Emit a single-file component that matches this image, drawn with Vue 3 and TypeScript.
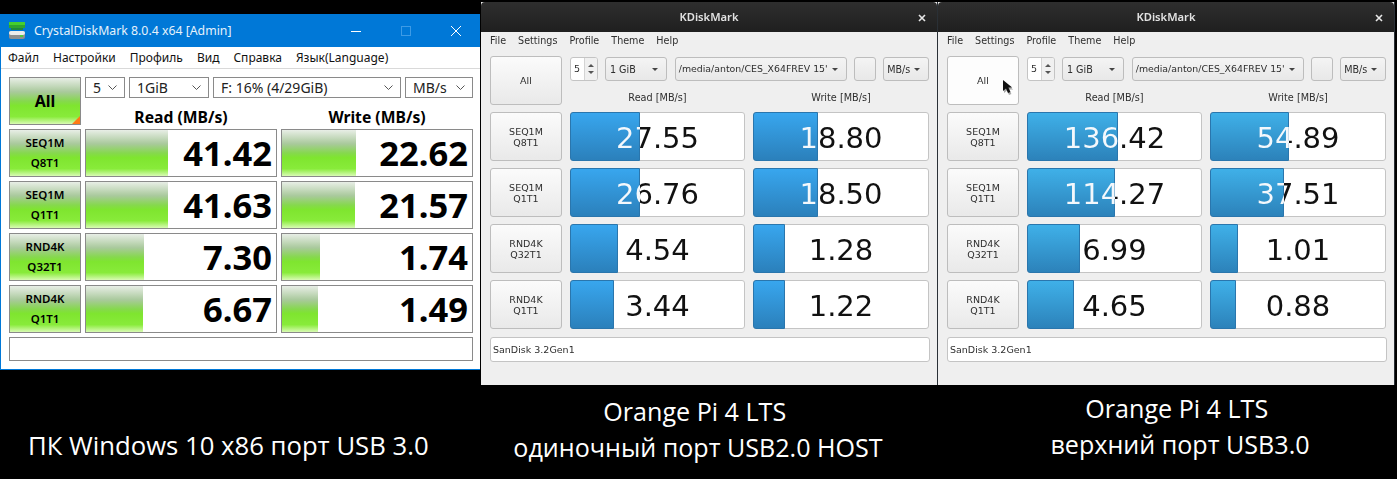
<script setup lang="ts">
interface Row {
  top: string
  bottom: string
  read: string
  readW: number
  write: string
  writeW: number
}

const labels = [
  ['SEQ1M', 'Q8T1'],
  ['SEQ1M', 'Q1T1'],
  ['RND4K', 'Q32T1'],
  ['RND4K', 'Q1T1'],
]

function rows(v: [string, number, string, number][]): Row[] {
  return v.map((r, i) => ({
    top: labels[i][0],
    bottom: labels[i][1],
    read: r[0],
    readW: r[1],
    write: r[2],
    writeW: r[3],
  }))
}

const cdmRows = rows([
  ['41.42', 82, '22.62', 74],
  ['41.63', 82, '21.57', 73],
  ['7.30', 58, '1.74', 38],
  ['6.67', 57, '1.49', 36],
])

const kdWindows = [
  {
    id: 'kd-left',
    rows: rows([
      ['27.55', 70, '18.80', 65],
      ['26.76', 70, '18.50', 65],
      ['4.54', 48, '1.28', 32],
      ['3.44', 44, '1.22', 32],
    ]),
  },
  {
    id: 'kd-right',
    rows: rows([
      ['136.42', 91, '54.89', 79],
      ['114.27', 88, '37.51', 74],
      ['6.99', 53, '1.01', 28],
      ['4.65', 47, '0.88', 26],
    ]),
  },
]

const cdmMenu = ['Файл', 'Настройки', 'Профиль', 'Вид', 'Справка', 'Язык(Language)']
const kdMenu = ['File', 'Settings', 'Profile', 'Theme', 'Help']
</script>

<template>
  <div class="page">
    <!-- CrystalDiskMark -->
    <section class="cdm">
      <header class="cdm-title">
        <svg class="cdm-icon" width="18" height="18" viewBox="0 0 18 18">
          <rect x="0" y="0" width="16" height="3" fill="#46cf2e" />
          <rect x="0" y="3" width="16" height="3" fill="#2fa52f" />
          <rect x="2" y="6" width="12" height="2" fill="#1d8a3c" />
          <rect x="0" y="9" width="16" height="8" rx="2" fill="#8f8f8f" />
          <rect x="0" y="9" width="16" height="4" rx="2" fill="#ececec" />
          <rect x="11" y="13" width="3" height="2" fill="#55c83a" />
        </svg>
        <span class="cdm-name">CrystalDiskMark 8.0.4 x64 [Admin]</span>
        <div class="cdm-controls">
          <svg width="12" height="12" viewBox="0 0 12 12"><path d="M1 6.5h10" stroke="#fff" fill="none" /></svg>
          <svg width="12" height="12" viewBox="0 0 12 12"><rect x="1.5" y="1.5" width="9" height="9" stroke="#3d9be6" fill="none" /></svg>
          <svg width="12" height="12" viewBox="0 0 12 12"><path d="M1 1l10 10M11 1L1 11" stroke="#fff" fill="none" /></svg>
        </div>
      </header>
      <nav class="cdm-menu">
        <span v-for="m in cdmMenu" :key="m">{{ m }}</span>
      </nav>
      <div class="cdm-grid">
        <div class="cdm-btn cdm-all">All<i class="cdm-corner"></i></div>
        <div class="cdm-top">
          <div class="cdm-combos">
            <div class="cdm-combo w-count">5<svg class="chev" width="9" height="5" viewBox="0 0 9 5"><path d="M.5.5l4 4 4-4" stroke="#555" fill="none" /></svg></div>
            <div class="cdm-combo w-size">1GiB<svg class="chev" width="9" height="5" viewBox="0 0 9 5"><path d="M.5.5l4 4 4-4" stroke="#555" fill="none" /></svg></div>
            <div class="cdm-combo w-drive">F: 16% (4/29GiB)<svg class="chev" width="9" height="5" viewBox="0 0 9 5"><path d="M.5.5l4 4 4-4" stroke="#555" fill="none" /></svg></div>
            <div class="cdm-combo w-unit">MB/s<svg class="chev" width="9" height="5" viewBox="0 0 9 5"><path d="M.5.5l4 4 4-4" stroke="#555" fill="none" /></svg></div>
          </div>
          <div class="cdm-heads">
            <span>Read (MB/s)</span>
            <span>Write (MB/s)</span>
          </div>
        </div>
        <template v-for="r in cdmRows" :key="r.read">
          <div class="cdm-btn cdm-label">
            <span>{{ r.top }}</span>
            <span>{{ r.bottom }}</span>
          </div>
          <div class="cdm-cell">
            <div class="cdm-bar" :style="{ width: r.readW + 'px' }"></div>
            <b>{{ r.read }}</b>
          </div>
          <div class="cdm-cell">
            <div class="cdm-bar" :style="{ width: r.writeW + 'px' }"></div>
            <b>{{ r.write }}</b>
          </div>
        </template>
        <div class="cdm-comment"></div>
      </div>
    </section>

    <!-- KDiskMark, twice -->
    <section v-for="w in kdWindows" :key="w.id" class="kd" :class="w.id">
      <header class="kd-title">
        <span>KDiskMark</span>
        <svg class="kd-close" width="8" height="8" viewBox="0 0 8 8"><path d="M1 1l6 6M7 1L1 7" stroke="#e8e8e8" stroke-width="1.6" fill="none" /></svg>
      </header>
      <nav class="kd-menu">
        <span v-for="m in kdMenu" :key="m">{{ m }}</span>
      </nav>
      <div class="kd-grid">
        <div class="kd-btn kd-all">All</div>
        <div class="kd-top">
          <div class="kd-controls">
            <div class="kd-spin">
              <span class="kd-spin-val">5</span>
              <span class="kd-spin-arrows"><i class="up"></i><i class="down"></i></span>
            </div>
            <div class="kd-combo w-size">1 GiB<i class="kd-caret"></i></div>
            <div class="kd-combo w-path"><span class="kd-path">/media/anton/CES_X64FREV 15'</span><i class="kd-caret"></i></div>
            <div class="kd-combo w-blank"></div>
            <div class="kd-combo w-unit">MB/s<i class="kd-caret"></i></div>
          </div>
          <div class="kd-heads">
            <span>Read [MB/s]</span>
            <span>Write [MB/s]</span>
          </div>
        </div>
        <template v-for="r in w.rows" :key="r.read">
          <div class="kd-btn kd-label">{{ r.top }}<br />{{ r.bottom }}</div>
          <div class="kd-cell" :style="{ '--fill': r.readW + 'px' }">
            <div class="kd-fill"></div>
            <span class="kd-val">{{ r.read }}</span>
          </div>
          <div class="kd-cell" :style="{ '--fill': r.writeW + 'px' }">
            <div class="kd-fill"></div>
            <span class="kd-val">{{ r.write }}</span>
          </div>
        </template>
        <div class="kd-comment">SanDisk 3.2Gen1</div>
      </div>
      <svg v-if="w.id === 'kd-right'" class="kd-cursor" width="12" height="18" viewBox="0 0 12 18">
        <path d="M2 3l0 11 3-2.6 2 4.6 2.4-1-2-4.4 3.8-.2z" fill="#555" opacity=".5" />
        <path d="M1 1l0 11 3-2.6 2 4.6 2.4-1-2-4.4 3.8-.2z" fill="#111" />
      </svg>
    </section>

    <p class="caption cap-a">ПК Windows 10 x86 порт USB 3.0</p>
    <p class="caption cap-b">Orange Pi 4 LTS&nbsp;<br />одиночный порт USB2.0 HOST</p>
    <p class="caption cap-c">Orange Pi 4 LTS&nbsp;<br />верхний порт USB3.0</p>
  </div>
</template>

<style scoped>
.page {
  position: relative;
  width: 1397px;
  height: 479px;
  overflow: hidden;
  background: #000;
}

/* --- CrystalDiskMark --- */
.cdm {
  position: absolute;
  left: 0;
  top: 14px;
  width: 480px;
  height: 356px;
  box-sizing: border-box;
  background: #fff;
  border-left: 1px solid #0078d7;
  border-bottom: 1px solid #0078d7;
  font-family: "Noto Sans", sans-serif;
  color: #000;
}

.cdm-title {
  display: flex;
  align-items: center;
  height: 33px;
  margin-left: -1px;
  padding-left: 9px;
  background: #0078d7;
  color: #fff;
  font-size: 12.3px;
}

.cdm-icon {
  flex: none;
}

.cdm-name {
  margin-left: 7px;
  color: #e6f2fb;
}

.cdm-controls {
  display: flex;
  gap: 38px;
  margin-left: auto;
  margin-right: 18px;
}

.cdm-menu {
  display: flex;
  gap: 14px;
  align-items: center;
  height: 21px;
  padding-left: 7px;
  border-bottom: 1px solid #d9d9d9;
  font-size: 12px;
  color: #111;
}

.cdm-grid {
  display: grid;
  grid-template-columns: 72px 192px 192px;
  grid-auto-rows: 48px;
  gap: 4px;
  padding: 8px 0 0 8px;
}

.cdm-btn {
  box-sizing: border-box;
  border: 1px solid #8a8a8a;
  background: linear-gradient(#e8eee6 0%, #a9c99c 30%, #86d84e 50%, #7fe52f 60%, #88eb3a 84%, #d9fbb4 100%);
}

.cdm-all {
  position: relative;
  display: flex;
  align-items: center;
  justify-content: center;
  font-size: 16px;
  font-weight: 700;
}

.cdm-corner {
  position: absolute;
  right: 0;
  bottom: 0;
  border-style: solid;
  border-width: 0 0 8px 8px;
  border-color: transparent transparent #ff7a14 transparent;
}

.cdm-top {
  grid-column: span 2;
  display: flex;
  flex-direction: column;
}

.cdm-combos {
  display: flex;
  gap: 4px;
  height: 24px;
}

.cdm-combo {
  box-sizing: border-box;
  display: flex;
  align-items: center;
  justify-content: space-between;
  padding: 0 7px;
  border: 1px solid #8a8a8a;
  background: #fff;
  font-size: 14px;
  color: #222;
}

.cdm-combo.w-count { width: 40px; }
.cdm-combo.w-size { width: 80px; }
.cdm-combo.w-drive { width: 188px; }
.cdm-combo.w-unit { width: 68px; }

.cdm-heads {
  display: grid;
  grid-template-columns: 192px 192px;
  column-gap: 4px;
  flex: 1;
  align-items: center;
  padding-top: 8px;
  text-align: center;
  font-size: 15.7px;
  font-weight: 700;
}

.cdm-label {
  display: flex;
  flex-direction: column;
  align-items: center;
  justify-content: center;
  gap: 2px;
  padding-bottom: 1px;
  font-size: 11.5px;
  font-weight: 600;
  line-height: 18px;
}

.cdm-cell {
  position: relative;
  box-sizing: border-box;
  display: flex;
  align-items: center;
  justify-content: flex-end;
  padding-right: 4px;
  border: 1px solid #8a8a8a;
  background: #fff;
}

.cdm-bar {
  position: absolute;
  left: 0;
  top: 0;
  bottom: 0;
  background: linear-gradient(#e8eee6 0%, #a9c99c 30%, #86d84e 50%, #7fe52f 60%, #88eb3a 84%, #d9fbb4 100%);
}

.cdm-cell b {
  position: relative;
  font-size: 34.5px;
  line-height: 1;
  font-weight: 700;
}

.cdm-comment {
  grid-column: 1 / -1;
  box-sizing: border-box;
  height: 24px;
  border: 1px solid #8a8a8a;
}

/* --- KDiskMark --- */
.kd {
  position: absolute;
  top: 2px;
  width: 457px;
  height: 383px;
  box-sizing: border-box;
  background: #efefef;
  border-right: 1px solid #2a3036;
  font-family: "DejaVu Sans", sans-serif;
  color: #2e2e2e;
  filter: blur(0.3px);
}

.kd-left { left: 481px; }
.kd-right { left: 938px; }

.kd-title {
  position: relative;
  display: flex;
  align-items: center;
  justify-content: center;
  height: 30px;
  padding-bottom: 2px;
  box-sizing: border-box;
  border-radius: 4px 4px 0 0;
  background: linear-gradient(#2e2e2e, #1f1f1f);
  color: #e2e2e2;
  font-family: "Noto Sans", sans-serif;
  font-size: 11.2px;
  font-weight: 600;
}

.kd-close {
  position: absolute;
  right: 11px;
  top: 12px;
}

.kd-menu {
  display: flex;
  gap: 12px;
  align-items: center;
  box-sizing: border-box;
  height: 20px;
  padding: 0 0 4px 9px;
  font-size: 9.6px;
}

.kd-grid {
  display: grid;
  grid-template-columns: 72px 175px 176px;
  grid-auto-rows: 49px;
  gap: 7px 8px;
  padding: 4px 0 0 9px;
}

.kd-btn {
  box-sizing: border-box;
  display: flex;
  align-items: center;
  justify-content: center;
  border: 1px solid #bdbdbd;
  border-radius: 3px;
  background: linear-gradient(#fbfbfb, #e9e9e9);
  text-align: center;
  font-size: 9.5px;
  line-height: 11px;
}

.kd-right .kd-all {
  background: #fdfdfd;
}

.kd-top {
  grid-column: span 2;
  display: flex;
  flex-direction: column;
}

.kd-controls {
  display: flex;
  align-items: flex-start;
  height: 25px;
  margin-top: 1px;
}

.kd-spin {
  box-sizing: border-box;
  display: flex;
  width: 28px;
  height: 24px;
  border: 1px solid #c4c4c4;
  border-radius: 3px;
  background: #fff;
  font-size: 9.5px;
  overflow: hidden;
}

.kd-spin-val {
  flex: 1;
  padding-left: 3px;
  line-height: 22px;
}

.kd-spin-arrows {
  display: flex;
  flex-direction: column;
  align-items: center;
  justify-content: center;
  gap: 4px;
  width: 12px;
  background: #f0f0f0;
  border-left: 1px solid #d4d4d4;
}

.kd-spin-arrows i {
  border-left: 3px solid transparent;
  border-right: 3px solid transparent;
}

.kd-spin-arrows .up { border-bottom: 3px solid #555; }
.kd-spin-arrows .down { border-top: 3px solid #555; }

.kd-combo {
  box-sizing: border-box;
  display: flex;
  align-items: center;
  justify-content: space-between;
  height: 24px;
  padding: 0 8px 0 3px;
  border: 1px solid #bdbdbd;
  border-radius: 3px;
  background: linear-gradient(#f4f4f4, #e8e8e8);
  font-size: 9.6px;
}

.kd-combo.w-size { width: 62px; margin-left: 7px; padding-left: 4px; }
.kd-combo.w-path { width: 173px; margin-left: 8px; }
.kd-combo.w-blank { width: 22px; margin-left: 7px; }
.kd-combo.w-unit { width: 46px; margin-left: 7px; }

.kd-path {
  width: 151px;
  white-space: nowrap;
  font-size: 9.4px;
  line-height: 14px;
}

.kd-caret {
  flex: none;
  border-left: 3px solid transparent;
  border-right: 3px solid transparent;
  border-top: 3px solid #444;
}

.kd-heads {
  display: grid;
  grid-template-columns: 175px 176px;
  column-gap: 8px;
  flex: 1;
  align-items: center;
  padding-top: 7px;
  text-align: center;
  font-size: 9.7px;
}

.kd-cell {
  position: relative;
  box-sizing: border-box;
  border: 1px solid #c4c4c4;
  border-radius: 3px;
  background: #fff;
}

.kd-val {
  position: relative;
  display: block;
  width: 100%;
  height: 100%;
  padding-top: 3px;
  box-sizing: border-box;
  font-size: 29px;
  line-height: 44px;
  text-align: center;
  white-space: nowrap;
  color: transparent;
  /* текст белый над полосой и чёрный рядом с ней */
  background: linear-gradient(to right, #f4f8fc calc(var(--fill) - 1px), #111 calc(var(--fill) - 1px));
  -webkit-background-clip: text;
  background-clip: text;
}

.kd-fill {
  position: absolute;
  left: -1px;
  top: -1px;
  bottom: -1px;
  width: var(--fill);
  box-sizing: border-box;
  border: 1px solid #2a76ad;
  border-radius: 3px 0 0 3px;
  background: linear-gradient(#38a6ee, #2b80bb);
}

.kd-right .kd-fill {
  background: linear-gradient(#3fb0e8, #2c82ba);
}

.kd-comment {
  grid-column: 1 / -1;
  box-sizing: border-box;
  width: 440px;
  height: 25px;
  margin-top: 1px;
  padding-left: 2px;
  border: 1px solid #c4c4c4;
  border-radius: 3px;
  background: #fff;
  font-size: 9.5px;
  line-height: 23px;
}

.kd-cursor {
  position: absolute;
  left: 64px;
  top: 77px;
}

/* --- подписи --- */
.caption {
  position: absolute;
  margin: 0;
  color: #fff;
  font-family: "Open Sans", sans-serif;
  font-size: 25.1px;
  line-height: 36px;
  text-align: center;
  white-space: nowrap;
}

.cap-a { left: 28px; top: 428px; font-size: 25.7px; }
.cap-b { left: 498px; width: 400px; top: 393px; }
.cap-c { left: 980px; width: 400px; top: 390px; }
</style>

<style>
body {
  background: #000;
}
</style>
